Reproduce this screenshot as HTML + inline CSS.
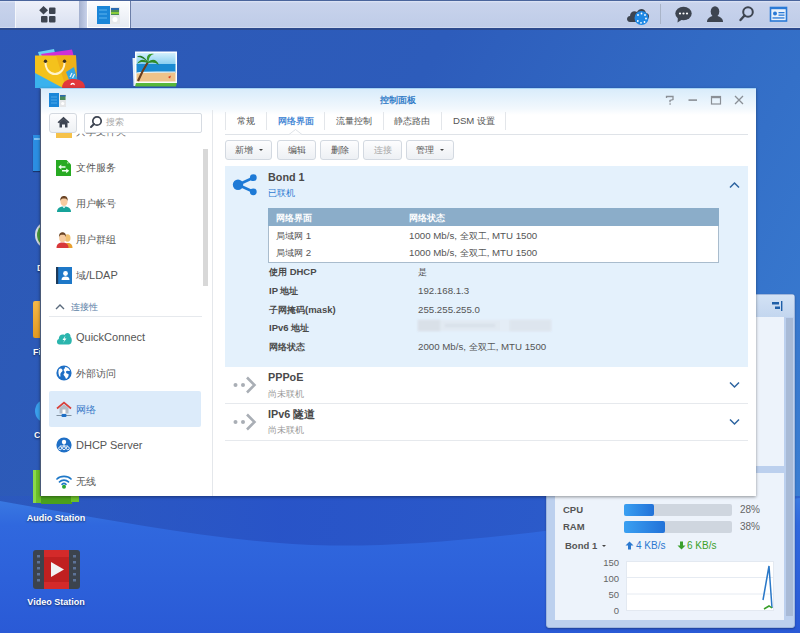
<!DOCTYPE html>
<html><head><meta charset="utf-8">
<style>
*{box-sizing:border-box;margin:0;padding:0}
html,body{width:800px;height:633px;overflow:hidden}
body{position:relative;font-family:"Liberation Sans",sans-serif;font-size:11px;color:#555;background:#2d5ec0}
.a{position:absolute}
.nw{white-space:nowrap}
.c{font-size:0.9em}
#bg{left:0;top:0;width:800px;height:633px;background:linear-gradient(120deg,#2c58b5 0%,#2d5cbb 40%,#3470c8 72%,#3c82d6 100%)}
#tb{left:0;top:0;width:800px;height:30px;background:linear-gradient(#dfe6f6 0px,#c8d3ec 2px,#bfcce8 26px,#dfe6f6 27px);border-top:1px solid #4a659c;border-bottom:2px solid #2c4a8e}
.dl{color:#fff;font-size:9px;font-weight:bold;text-shadow:0 1px 2px rgba(0,0,0,.5);text-align:center;width:90px}
#win{left:40px;top:88px;width:716px;height:408px;background:#fff;box-shadow:0 1px 3px rgba(0,0,0,.4);border-top:1px solid #a6d4f6;border-left:1px solid #4a5a78}
#title{left:41px;top:89px;width:715px;height:26px;background:linear-gradient(#d9ecfb,#f2f8fd 75%,#fff)}
.si{left:49px;width:152px;height:36px;border-radius:2px}
.si .tx{position:absolute;left:27px;top:12px;font-size:11px;color:#555;white-space:nowrap}
.si .tx .c{font-size:0.91em}
.si svg{position:absolute;left:7px;top:10px}
.tab{top:115px;font-size:9.6px;color:#555;white-space:nowrap}
.tab .c{font-size:0.92em}
.tsep{top:112px;width:1px;height:18px;background:#e3e6ea}
.btn{top:140px;height:20px;border:1px solid #d3d9e1;border-radius:3px;background:linear-gradient(#fdfdfe,#edf0f4);font-size:10px;color:#555;text-align:center;line-height:18px;white-space:nowrap}
.btn .c{font-size:0.9em}
.tri{display:inline-block;width:0;height:0;border-top:2.5px solid #444;border-left:2.5px solid transparent;border-right:2.5px solid transparent;margin-left:6px;vertical-align:2px}
.rw{font-size:9.7px;color:#555;white-space:nowrap}
.rw .c{font-size:0.92em}
.lb{font-size:9.5px;color:#4a4a4a;font-weight:bold;white-space:nowrap}
.lb .c{font-size:0.92em}
.hd{font-size:10.8px;font-weight:bold;color:#4a4a4a;white-space:nowrap}
.hd .c{font-size:1em}
.sub{font-size:9.5px;white-space:nowrap}
.sub .c{font-size:0.92em}
.wl{font-size:9.5px;font-weight:bold;color:#555;white-space:nowrap}
.wv{font-size:10px;color:#666;white-space:nowrap}
</style></head><body>
<div id="bg" class="a"></div>
<svg class="a" style="left:0;top:0" width="800" height="633">
  <defs><linearGradient id="sw" x1="0" y1="0" x2="0" y2="1"><stop offset="0" stop-color="#3a7ae2"/><stop offset="0.2" stop-color="#3068de"/><stop offset="1" stop-color="#2a5ad6"/></linearGradient>
  <linearGradient id="dk" x1="0" y1="0" x2="1" y2="0"><stop offset="0" stop-color="#2954c8" stop-opacity="0.3"/><stop offset="0.35" stop-color="#2853c8" stop-opacity="0.95"/><stop offset="1" stop-color="#2a58cc" stop-opacity="0.7"/></linearGradient></defs>
  <rect x="0" y="496" width="800" height="54" fill="url(#dk)"/>
  <path d="M0 501 C 100 518, 220 543, 330 545.5 C 440 547, 560 530, 800 498 L800 633 L0 633 Z" fill="url(#sw)"/>
</svg>

<!-- ===== desktop icons ===== -->
<!-- package center -->
<svg class="a" style="left:30px;top:45px" width="60" height="45" viewBox="0 0 60 45">
  <path d="M8 7 L24 4 L26 12 L10 13 Z" fill="#6cd3f2"/>
  <path d="M11 9 L42 4.5 L44 12 L13 13 Z" fill="#cf2fd8"/>
  <path d="M5 10.5 L46 10.5 L47 43 L5 43 Z" fill="#f4c21c"/>
  <path d="M26 10.5 L46 10.5 L47 43 L36 43 Z" fill="#efb018"/>
  <path d="M5 28 L33 43 L5 43 Z" fill="#3ab2ee"/>
  <path d="M15.5 17 C 15.5 33, 34.5 33, 34.5 17" stroke="#fff3c8" stroke-width="2" fill="none"/>
  <circle cx="15.5" cy="16.3" r="1.7" fill="#3a3020"/><circle cx="34.5" cy="16.3" r="1.7" fill="#3a3020"/>
  <path d="M36 27 L44 22 L48 37 L41 40 Z" fill="#36a6e2"/>
  <path d="M40 32 L42 28 M42.5 33 L44.5 29" stroke="#e8f6ff" stroke-width="1.2"/>
  <path d="M32 43 C 32 36, 38 34, 43 34 C 49 34, 55 36, 55 43 Z" fill="#e2383c"/>
  <path d="M41 40 C 41 38, 45 38, 44 40" stroke="#fff" stroke-width="1.3" fill="none"/>
</svg>
<!-- photo station -->
<svg class="a" style="left:131px;top:49px" width="50" height="40" viewBox="0 0 50 40">
  <path d="M1.5 9 L6 9 L6 37 L2.5 37 Z" fill="#e6eef6"/>
  <path d="M5 34 L46 33 L45 37.5 L4 37.5 Z" fill="#58b83a"/>
  <rect x="4" y="2.5" width="42" height="31.5" fill="#fbfdff"/>
  <defs><linearGradient id="sky" x1="0" y1="0" x2="0" y2="1"><stop offset="0" stop-color="#d2effc"/><stop offset="1" stop-color="#86cdf0"/></linearGradient></defs>
  <rect x="5.5" y="4" width="39" height="11.5" fill="url(#sky)"/>
  <rect x="5.5" y="15" width="39" height="9" fill="#1a8ad2"/>
  <path d="M5.5 24 C 15 22.5, 30 23.5, 44.5 23 L44.5 32.5 L5.5 32.5 Z" fill="#eec38a"/>
  <path d="M5.5 24 C 15 22.5, 30 23.5, 44.5 23" stroke="#e8f6fb" stroke-width="1.2" fill="none"/>
  <path d="M7 32 C 10 25, 13 19, 17 13" stroke="#6b3e1e" stroke-width="2.2" fill="none"/>
  <path d="M17 13 C 12 9, 8 11, 6 15 C 10 12, 13 13, 17 14 Z" fill="#2f8a2a"/>
  <path d="M17 13 C 22 9, 26 11, 28 16 C 24 13, 21 13, 17 14 Z" fill="#2f8a2a"/>
  <path d="M17 13 C 14 7, 18 3.5, 23 5 C 19 6, 18 9, 17.5 13 Z" fill="#3a9a2e"/>
  <path d="M17 13 C 12 6, 8 6, 6 8 C 10 8, 14 10, 17 13.5 Z" fill="#267a24"/>
  <path d="M37 28 L40 26.5 L39 29.5 Z" fill="#d83a20"/>
</svg>
<!-- left partial icons (hidden behind window) -->
<div class="a" style="left:33px;top:135px;width:12px;height:36px;background:#2b8ee2;box-shadow:0 1px 1px rgba(0,0,0,.4)"></div>
<div class="a" style="left:34px;top:138px;width:8px;height:2px;background:#7cc0f5"></div>
<div class="a" style="left:35px;top:221px;width:14px;height:28px;border-radius:14px 0 0 14px;border:2px solid #d4dae2;border-right:none;background:#4a9a3a"></div>
<div class="a dl nw" style="left:37px;top:263px;width:auto">D</div>
<div class="a" style="left:33px;top:301px;width:12px;height:37px;background:linear-gradient(#f5b848,#e39a22);border-radius:2px 0 0 2px"></div>
<div class="a dl nw" style="left:33px;top:347px;width:auto">Fi</div>
<div class="a" style="left:35px;top:399px;width:12px;height:24px;border-radius:12px 0 0 12px;background:#3aa0ec"></div>
<div class="a dl nw" style="left:34px;top:430px;width:auto">Cl</div>
<!-- audio station -->
<svg class="a" style="left:30px;top:468px" width="52" height="38" viewBox="0 0 52 38">
  <rect x="3" y="2" width="12" height="33" fill="#6cc02a"/>
  <rect x="3" y="2" width="3" height="33" fill="#8ad84a"/>
  <rect x="11" y="27" width="31" height="9" fill="#4aa01c"/>
  <rect x="41" y="27" width="8" height="7" fill="#6cc02a"/>
</svg>
<div class="a dl nw" style="left:11px;top:513px">Audio Station</div>
<!-- video station -->
<svg class="a" style="left:33px;top:550px" width="47" height="39" viewBox="0 0 47 39">
  <rect x="0" y="0" width="47" height="39" rx="3" fill="#3c434d"/>
  <rect x="11" y="0" width="25" height="39" fill="#d42a2a"/>
  <rect x="11" y="7" width="25" height="25" fill="#c02020"/>
  <path d="M18 12 L31 19.5 L18 27 Z" fill="#f2f2f2"/>
  <g fill="#5d7398"><rect x="4" y="5" width="3" height="2.5"/><rect x="4" y="11" width="3" height="2.5"/><rect x="4" y="17" width="3" height="2.5"/><rect x="4" y="23" width="3" height="2.5"/><rect x="4" y="29" width="3" height="2.5"/>
  <rect x="40" y="5" width="3" height="2.5"/><rect x="40" y="11" width="3" height="2.5"/><rect x="40" y="17" width="3" height="2.5"/><rect x="40" y="23" width="3" height="2.5"/><rect x="40" y="29" width="3" height="2.5"/></g>
</svg>
<div class="a dl nw" style="left:11px;top:597px">Video Station</div>

<div id="tb" class="a"></div>
<div class="a" style="left:15px;top:1px;width:1px;height:27px;background:#f4f6fb"></div>
<div class="a" style="left:16px;top:1px;width:63px;height:27px;background:linear-gradient(#eef1fa,#d9e0f0)"></div>
<div class="a" style="left:79px;top:1px;width:8px;height:27px;background:linear-gradient(90deg,#a4b1cf,#c8d2ea)"></div>
<div class="a" style="left:87px;top:1px;width:43px;height:27px;background:linear-gradient(#fbfcfe,#e6ebf3);border:1px solid #fff"></div>
<div class="a" style="left:130px;top:1px;width:1px;height:27px;background:#6c7ea8"></div>
<!-- apps icon -->
<svg class="a" style="left:38px;top:5px" width="20" height="19" viewBox="0 0 20 19">
  <path d="M5.5 1 L10 5.3 L5.5 9.6 L1.2 5.3 Z" fill="#3d4450"/>
  <rect x="11" y="2.5" width="6.5" height="6.5" rx="1" fill="#3d4450"/>
  <rect x="3" y="11" width="6.5" height="6.5" rx="1" fill="#3d4450"/>
  <rect x="11" y="11" width="6.5" height="6.5" rx="1" fill="#3d4450"/>
</svg>
<!-- control panel icon -->
<svg class="a" style="left:96px;top:5px" width="26" height="20" viewBox="0 0 26 20">
  <rect x="1" y="1" width="13" height="18" fill="#1a86d8"/>
  <g stroke="#6fc0f5" stroke-width="0.8"><line x1="3" y1="5" x2="11" y2="5"/><line x1="3" y1="9" x2="11" y2="9"/><line x1="3" y1="13" x2="11" y2="13"/></g>
  <rect x="14" y="2" width="10" height="17" fill="#e6e8ea"/>
  <rect x="15" y="3" width="8" height="7" fill="#4a8a5a"/>
  <rect x="15" y="3" width="8" height="2" fill="#2a6ab0"/>
  <rect x="15" y="7" width="8" height="2" fill="#8acb3a"/>
  <circle cx="19" cy="14.5" r="2.5" fill="#fff"/>
</svg>
<!-- cloud sync -->
<svg class="a" style="left:626px;top:5px" width="26" height="22" viewBox="0 0 26 22">
  <path d="M4 17 C0 17, 0 11, 4 11 C4 7, 8 5, 11 7 C13 3, 19 3, 20 8 C23 8, 24 12, 22 14 L20 17 Z" fill="#3d4450"/>
  <circle cx="15.5" cy="13" r="7" fill="#1e88e5"/>
  <g fill="#fff"><circle cx="15.5" cy="8.5" r="0.9"/><circle cx="19" cy="10" r="0.9"/><circle cx="20" cy="13.5" r="0.9"/><circle cx="18.5" cy="17" r="0.9"/><circle cx="15" cy="17.8" r="0.9"/><circle cx="11.8" cy="16" r="0.9"/><circle cx="12" cy="10" r="0.9"/></g>
</svg>
<div class="a" style="left:660px;top:4px;width:1px;height:20px;background:#a9b4c8"></div>
<!-- chat -->
<svg class="a" style="left:674px;top:5px" width="20" height="19" viewBox="0 0 20 19">
  <ellipse cx="9.5" cy="8.5" rx="8.2" ry="6.8" fill="#3d4450"/>
  <path d="M4 12 L3.5 17.5 L9 14 Z" fill="#3d4450"/>
  <circle cx="6" cy="8.5" r="1.1" fill="#fff"/><circle cx="9.5" cy="8.5" r="1.1" fill="#fff"/><circle cx="13" cy="8.5" r="1.1" fill="#fff"/>
</svg>
<!-- user -->
<svg class="a" style="left:705px;top:5px" width="20" height="19" viewBox="0 0 20 19">
  <ellipse cx="10" cy="6.5" rx="4.3" ry="5.3" fill="#3d4450"/>
  <path d="M7.5 11 L12.5 11 C17 12.5, 18 14.5, 18 17 L2 17 C2 14.5, 3 12.5, 7.5 11 Z" fill="#3d4450"/>
</svg>
<!-- search -->
<svg class="a" style="left:737px;top:5px" width="20" height="19" viewBox="0 0 20 19">
  <circle cx="11" cy="7" r="4.8" stroke="#3d4450" stroke-width="2" fill="none"/>
  <line x1="7.5" y1="10.5" x2="3.5" y2="15" stroke="#3d4450" stroke-width="2.4" stroke-linecap="round"/>
</svg>
<!-- card -->
<svg class="a" style="left:768px;top:5px" width="20" height="19" viewBox="0 0 20 19">
  <rect x="2.5" y="2.5" width="16" height="13.5" fill="#e9f1fb" stroke="#2a7ad6" stroke-width="1.6"/>
  <rect x="2.5" y="2" width="16" height="2.2" fill="#2a7ad6"/>
  <circle cx="7" cy="8.5" r="2" fill="#2a7ad6"/>
  <rect x="10.5" y="7" width="6" height="1.3" fill="#2a7ad6"/>
  <rect x="10.5" y="9.5" width="6" height="1.3" fill="#2a7ad6"/>
  <rect x="4.5" y="12.3" width="12" height="1.3" fill="#2a7ad6"/>
</svg>

<!-- widget frame -->
<div class="a" style="left:546px;top:294px;width:249px;height:334px;background:#bcd0ee;border:1px solid #9fb6dc;border-radius:3px;box-shadow:0 1px 2px rgba(0,0,0,.3)"></div>
<div class="a" style="left:547px;top:295px;width:247px;height:22px;background:linear-gradient(#d3e2f5,#c3d6ef)"></div>
<svg class="a" style="left:770px;top:300px" width="14" height="12" viewBox="0 0 14 12">
  <rect x="2" y="2" width="7" height="2.5" fill="#1f5fa8"/>
  <rect x="5" y="6.5" width="5" height="2.5" fill="#1f5fa8"/>
  <rect x="11" y="1" width="1.4" height="10" fill="#1f5fa8"/>
</svg>
<div class="a" style="left:555px;top:317px;width:229px;height:149px;background:#edf3fb"></div>
<div class="a" style="left:555px;top:473px;width:229px;height:147px;background:#edf3fb"></div>
<div class="a" style="left:786px;top:318px;width:7px;height:298px;background:#a8bad6"></div>
<!-- stats -->
<div class="a wl" style="left:563px;top:504px">CPU</div>
<div class="a" style="left:624px;top:504px;width:108px;height:12px;background:#cfd6df;border-radius:2px"></div>
<div class="a" style="left:624px;top:504px;width:30px;height:12px;background:linear-gradient(90deg,#3aa0f2,#2272d8);border-radius:2px"></div>
<div class="a wv" style="left:740px;top:504px">28%</div>
<div class="a wl" style="left:563px;top:521px">RAM</div>
<div class="a" style="left:624px;top:521px;width:108px;height:12px;background:#cfd6df;border-radius:2px"></div>
<div class="a" style="left:624px;top:521px;width:41px;height:12px;background:linear-gradient(90deg,#3aa0f2,#2272d8);border-radius:2px"></div>
<div class="a wv" style="left:740px;top:521px">38%</div>
<div class="a wl" style="left:565px;top:540px">Bond 1<span class="tri" style="margin-left:5px"></span></div>
<svg class="a" style="left:625px;top:541px" width="9" height="9" viewBox="0 0 9 9"><path d="M4.5 0.5 L8.5 4.5 L6 4.5 L6 8.5 L3 8.5 L3 4.5 L0.5 4.5 Z" fill="#2a78d0"/></svg>
<div class="a wv" style="left:636px;top:540px;color:#2a78d0">4 KB/s</div>
<svg class="a" style="left:677px;top:541px" width="9" height="9" viewBox="0 0 9 9"><path d="M4.5 8.5 L8.5 4.5 L6 4.5 L6 0.5 L3 0.5 L3 4.5 L0.5 4.5 Z" fill="#3aa02a"/></svg>
<div class="a wv" style="left:687px;top:540px;color:#3aa02a">6 KB/s</div>
<!-- chart -->
<div class="a wv" style="left:590px;top:557px;width:29px;text-align:right;font-size:9.5px">150</div>
<div class="a wv" style="left:590px;top:573px;width:29px;text-align:right;font-size:9.5px">100</div>
<div class="a wv" style="left:590px;top:589px;width:29px;text-align:right;font-size:9.5px">50</div>
<div class="a wv" style="left:590px;top:605px;width:29px;text-align:right;font-size:9.5px">0</div>
<svg class="a" style="left:626px;top:561px" width="148" height="50" viewBox="0 0 148 50">
  <rect x="0.5" y="0.5" width="147" height="49" fill="#fff" stroke="#e3e9f1"/>
  <line x1="1" y1="16.5" x2="147" y2="16.5" stroke="#e6ebf2"/>
  <line x1="1" y1="33" x2="147" y2="33" stroke="#e6ebf2"/>
  <polyline points="137,39 143,5 146,47" stroke="#2a78c8" stroke-width="1.5" fill="none"/>
  <polyline points="138,48 143,45 146,47" stroke="#3aa02a" stroke-width="1.5" fill="none"/>
</svg>

<div id="win" class="a"></div>
<div id="title" class="a"></div>
<svg class="a" style="left:49px;top:93px" width="18" height="15" viewBox="0 0 18 15">
  <rect x="0" y="0" width="10" height="14" fill="#1a86d8"/>
  <g stroke="#6fc0f5" stroke-width="0.6"><line x1="2" y1="4" x2="8" y2="4"/><line x1="2" y1="7" x2="8" y2="7"/><line x1="2" y1="10" x2="8" y2="10"/></g>
  <rect x="10.5" y="1" width="6.5" height="13" fill="#e4e6e8"/>
  <rect x="11" y="2" width="5.5" height="5" fill="#4a8a5a"/>
  <rect x="11" y="2" width="5.5" height="1.5" fill="#2a6ab0"/>
  <circle cx="13.7" cy="10.5" r="1.6" fill="#fff"/>
</svg>
<div class="a nw" style="left:380px;top:94px;font-size:10.3px;color:#1f73c4;-webkit-text-stroke:0.25px #1f73c4"><span class="c">控制面板</span></div>
<!-- window controls -->
<svg class="a" style="left:662px;top:94px" width="86" height="12" viewBox="0 0 86 12">
  <path d="M4.5 4 L4.5 2.5 L11 2.5 L11 5.5 L8 6.5 L8 8.2" stroke="#8a8f96" stroke-width="1.3" fill="none"/>
  <rect x="7.4" y="9.3" width="1.4" height="1.4" fill="#8a8f96"/>
  <rect x="26.5" y="5.3" width="8.5" height="1.6" fill="#8a8f96"/>
  <rect x="49.5" y="2.5" width="9" height="7.5" stroke="#8a8f96" stroke-width="1.2" fill="none"/>
  <rect x="49" y="2" width="10" height="2.2" fill="#8a8f96"/>
  <path d="M73 2 L81 10 M81 2 L73 10" stroke="#8a8f96" stroke-width="1.3"/>
</svg>
<div class="a" style="left:212px;top:110px;width:1px;height:386px;background:#e4e7eb"></div>

<!-- sidebar -->
<div class="a" style="left:49px;top:113px;width:28px;height:20px;border:1px solid #d4d9e0;border-radius:3px;background:linear-gradient(#fdfdfe,#eef1f4)"></div>
<svg class="a" style="left:57px;top:116px" width="13" height="12" viewBox="0 0 13 12">
  <path d="M6.5 0.8 L12.5 6.3 L11 7.2 L6.5 3.2 L2 7.2 L0.5 6.3 Z" fill="#3d4451"/>
  <path d="M2.5 6.5 L6.5 3 L10.5 6.5 L10.5 11.5 L8 11.5 L8 8.5 L5 8.5 L5 11.5 L2.5 11.5 Z" fill="#3d4451"/>
</svg>
<div class="a" style="left:84px;top:113px;width:118px;height:20px;border:1px solid #d6dbe2;border-radius:2px;background:#fff"></div>
<svg class="a" style="left:89px;top:115px" width="14" height="14" viewBox="0 0 14 14">
  <circle cx="8" cy="6" r="4.2" stroke="#3d4451" stroke-width="1.7" fill="none"/>
  <line x1="5" y1="9" x2="2" y2="12" stroke="#3d4451" stroke-width="2" stroke-linecap="round"/>
</svg>
<div class="a nw" style="left:106px;top:116px;font-size:10px;color:#aaa"><span class="c">搜索</span></div>

<!-- list (clipped) -->
<div class="a" style="left:41px;top:133px;width:171px;height:363px;overflow:hidden">
 <div class="a" style="left:-41px;top:-133px;width:212px;height:496px">
  <div class="a si" style="top:113px">
    <svg width="16" height="16" viewBox="0 0 16 16"><rect x="0" y="3" width="16" height="12" fill="#f2b035"/><rect x="0" y="9" width="16" height="6" fill="#f6c24a"/></svg>
    <div class="tx" style="color:#666"><span class="c">共享文件夹</span></div></div>
  <div class="a si" style="top:149px">
    <svg width="15" height="16" viewBox="0 0 15 16" style="left:7px;top:11px"><path d="M0 0 L10.5 0 L15 4.5 L15 16 L0 16 Z" fill="#27aa22"/><circle cx="11.8" cy="2.8" r="0.9" fill="#9ae090"/><path d="M4 7 L9.5 7 M11.5 10.8 L6 10.8" stroke="#f0fff0" stroke-width="1.6" fill="none"/><path d="M2.3 7 L5.3 4.6 L5.3 9.4 Z M13.2 10.8 L10.2 8.4 L10.2 13.2 Z" fill="#f0fff0"/></svg>
    <div class="tx"><span class="c">文件服务</span></div></div>
  <div class="a si" style="top:185px">
    <svg width="16" height="17" viewBox="0 0 16 17"><path d="M1 17 C1 13, 4 11.5, 8 11.5 C12 11.5, 15 13, 15 17 Z" fill="#17a39a"/><path d="M6.3 11.5 L8 13.3 L9.7 11.5 Z" fill="#fff"/><ellipse cx="8" cy="6.5" rx="3.6" ry="4.6" fill="#f6cba0"/><path d="M4.3 6 C4 2, 6 1, 8 1 C10 1, 12 2, 11.7 6 C11 4, 10 3.5, 8 3.5 C6 3.5, 5 4, 4.3 6 Z" fill="#6b4526"/></svg>
    <div class="tx"><span class="c">用户帐号</span></div></div>
  <div class="a si" style="top:221px">
    <svg width="17" height="17" viewBox="0 0 17 17"><ellipse cx="11.5" cy="7" rx="3" ry="3.8" fill="#f0c070"/><path d="M8 17 C8 13, 10 12, 12 12 C14.5 12, 16.5 13.5, 16.5 17 Z" fill="#e8a030"/><path d="M0.5 17 C0.5 13, 3 11.5, 6.5 11.5 C10 11.5, 12.5 13, 12.5 17 Z" fill="#d8383a"/><ellipse cx="6.5" cy="6.8" rx="3.4" ry="4.4" fill="#f6cba0"/><path d="M3 6.3 C2.8 2, 5 1.3, 6.5 1.3 C8 1.3, 10.2 2, 10 6.3 C9.5 4.3, 8.5 3.8, 6.5 3.8 C4.5 3.8, 3.5 4.3, 3 6.3 Z" fill="#6b4526"/></svg>
    <div class="tx"><span class="c">用户群组</span></div></div>
  <div class="a si" style="top:257px">
    <svg width="16" height="17" viewBox="0 0 16 17"><rect x="0" y="0" width="16" height="17" fill="#1e78c8"/><rect x="0" y="0" width="2.2" height="17" fill="#1c3a5a"/><circle cx="9.5" cy="6.5" r="2.4" fill="#fff"/><path d="M5.5 13 C5.5 10.5, 7 9.5, 9.5 9.5 C12 9.5, 13.5 10.5, 13.5 13 Z" fill="#fff"/></svg>
    <div class="tx"><span class="c">域</span>/LDAP</div></div>
  <svg class="a" style="left:55px;top:303px" width="10" height="7" viewBox="0 0 10 7"><path d="M1 6 L5 2 L9 6" stroke="#5a6a7c" stroke-width="1.4" fill="none"/></svg>
  <div class="a nw" style="left:71px;top:299.5px;font-size:10.5px;color:#5b7ea6"><span class="c" style="font-size:0.9em"><span class="c">连接性</span></span></div>
  <div class="a" style="left:49px;top:316px;width:153px;height:1px;background:#e6e9ed"></div>
  <div class="a si" style="top:319px">
    <svg width="16" height="14" viewBox="0 0 16 14" style="top:12px"><path d="M3.5 13.5 C0.5 13.5, 0 9, 2.8 8 C2.5 4.5, 6 2.5, 8.5 4 C10 0.5, 15 1.5, 14.5 6 C16.5 7, 16.3 13.5, 13 13.5 Z" fill="#2bb5ad"/><path d="M9.5 4.5 L6.5 9 L8.5 9 L7 12 L10.5 7.5 L8.5 7.5 Z" fill="#fff"/></svg>
    <div class="tx">QuickConnect</div></div>
  <div class="a si" style="top:355px">
    <svg width="16" height="16" viewBox="0 0 16 16"><circle cx="8" cy="8" r="7.6" fill="#1e6fc6"/><path d="M3 4 C4.5 3, 6 3.5, 6.5 5 C7 6.5, 5 7, 4.5 8.5 C4 10, 5 11, 4 12 C2.5 10.5, 1.8 7, 3 4 Z M9 2 C11 2, 13.5 3.5, 14 6 C12.5 6, 11 5, 10 6.5 C9.5 7.5, 11 9, 12.5 9 C13 10.5, 12 13, 10 14 C9.5 12.5, 9 11.5, 8 10.5 C7 9.5, 8 8.5, 8.5 8 C9 7, 8 6, 7.5 5 C8 4, 9 3.5, 9 2 Z" fill="#fff"/></svg>
    <div class="tx"><span class="c">外部访问</span></div></div>
  <div class="a si" style="top:391px;background:#dcebfa">
    <svg width="16" height="17" viewBox="0 0 16 17"><path d="M1 7.5 L8 1.5 L15 7.5" stroke="#d8403a" stroke-width="1.7" fill="none"/><path d="M3.5 7 L8 3.3 L12.5 7 L12.5 12.5 L3.5 12.5 Z" fill="#b4bcc6"/><rect x="6.5" y="8.5" width="3" height="4" fill="#fff"/><line x1="0.5" y1="14.5" x2="15.5" y2="14.5" stroke="#6a7a8a" stroke-width="0.8"/><rect x="5.5" y="13" width="5" height="3" rx="1" fill="#1e6fc6"/></svg>
    <div class="tx" style="color:#3a7ac8"><span class="c">网络</span></div></div>
  <div class="a si" style="top:427px">
    <svg width="16" height="16" viewBox="0 0 16 16"><circle cx="8" cy="8" r="7.6" fill="#1e6fc6"/><circle cx="8" cy="5" r="2.2" fill="#fff"/><g stroke="#fff" stroke-width="0.9" fill="none"><line x1="8" y1="7" x2="8" y2="9"/><line x1="4" y1="9" x2="12" y2="9"/><circle cx="4.2" cy="11.2" r="1.5"/><circle cx="8" cy="11.2" r="1.5"/><circle cx="11.8" cy="11.2" r="1.5"/></g></svg>
    <div class="tx">DHCP Server</div></div>
  <div class="a si" style="top:463px">
    <svg width="16" height="15" viewBox="0 0 16 15" style="top:11px"><g stroke="#1e78c8" stroke-width="1.7" fill="none" stroke-linecap="round"><path d="M1 5 C4.5 1.5, 11.5 1.5, 15 5"/><path d="M3.5 7.8 C6 5.5, 10 5.5, 12.5 7.8"/><path d="M6 10.3 C7.2 9.3, 8.8 9.3, 10 10.3"/></g><circle cx="8" cy="12.8" r="2" fill="#2aa838"/></svg>
    <div class="tx"><span class="c">无线</span></div></div>
  <div class="a" style="left:203px;top:149px;width:5px;height:137px;background:#d8d8d8"></div>
 </div>
</div>

<!-- tabs -->
<div class="a tsep" style="left:225px"></div>
<div class="a tab" style="left:237px"><span class="c">常规</span></div>
<div class="a tsep" style="left:266px"></div>
<div class="a tab" style="left:278px;color:#2f7ad2;-webkit-text-stroke:0.2px #2f7ad2"><span class="c">网络界面</span></div>
<div class="a tsep" style="left:324px"></div>
<div class="a tab" style="left:336px"><span class="c">流量控制</span></div>
<div class="a tsep" style="left:383px"></div>
<div class="a tab" style="left:394px"><span class="c">静态路由</span></div>
<div class="a tsep" style="left:441px"></div>
<div class="a tab" style="left:453px">DSM <span class="c">设置</span></div>
<div class="a tsep" style="left:505px"></div>
<div class="a" style="left:225px;top:134px;width:523px;height:1px;background:#dfe3e8"></div>
<svg class="a" style="left:289px;top:129px" width="13" height="7" viewBox="0 0 13 7"><path d="M0 5.5 L6.5 0.5 L13 5.5" stroke="#dfe3e8" stroke-width="1" fill="#fff"/></svg>

<!-- buttons -->
<div class="a btn" style="left:225px;width:47px"><span class="c">新增</span><span class="tri"></span></div>
<div class="a btn" style="left:277px;width:39px"><span class="c">编辑</span></div>
<div class="a btn" style="left:320px;width:39px"><span class="c">删除</span></div>
<div class="a btn" style="left:363px;width:39px;color:#aaa"><span class="c">连接</span></div>
<div class="a btn" style="left:406px;width:48px"><span class="c">管理</span><span class="tri"></span></div>

<!-- bond panel -->
<div class="a" style="left:225px;top:166px;width:523px;height:201px;background:#e4f1fc"></div>
<svg class="a" style="left:231px;top:172px" width="28" height="25" viewBox="0 0 28 25">
  <g stroke="#1e7ad6" stroke-width="2.6"><line x1="7" y1="12.7" x2="22.3" y2="5.7"/><line x1="7" y1="12.7" x2="22.3" y2="19.8"/></g>
  <circle cx="7" cy="12.7" r="5.2" fill="#1e7ad6"/><circle cx="22.3" cy="5.7" r="3.4" fill="#1e7ad6"/><circle cx="22.3" cy="19.8" r="3.4" fill="#1e7ad6"/>
</svg>
<div class="a hd" style="left:268px;top:171px">Bond 1</div>
<div class="a sub" style="left:268px;top:187px;color:#2f7ad2"><span class="c">已联机</span></div>
<svg class="a" style="left:729px;top:181px" width="11" height="8" viewBox="0 0 11 8"><path d="M1 6.5 L5.5 2 L10 6.5" stroke="#2d64a0" stroke-width="1.5" fill="none"/></svg>
<div class="a" style="left:268px;top:208px;width:451px;height:55px;border:1px solid #a9bccd;background:#fff"></div>
<div class="a" style="left:268px;top:208px;width:451px;height:18px;background:#8badc9"></div>
<div class="a lb" style="left:276px;top:212px;color:#fff"><span class="c">网络界面</span></div>
<div class="a lb" style="left:409px;top:212px;color:#fff"><span class="c">网络状态</span></div>
<div class="a rw" style="left:276px;top:230px"><span class="c">局域网</span> 1</div>
<div class="a rw" style="left:409px;top:230px">1000 Mb/s, <span class="c">全双工</span>, MTU 1500</div>
<div class="a rw" style="left:276px;top:247px"><span class="c">局域网</span> 2</div>
<div class="a rw" style="left:409px;top:247px">1000 Mb/s, <span class="c">全双工</span>, MTU 1500</div>

<div class="a lb" style="left:269px;top:266px"><span class="c">使用</span> DHCP</div><div class="a rw" style="left:418px;top:266px"><span class="c">是</span></div>
<div class="a lb" style="left:269px;top:285px">IP <span class="c">地址</span></div><div class="a rw" style="left:418px;top:285px">192.168.1.3</div>
<div class="a lb" style="left:269px;top:304px"><span class="c">子网掩码</span>(mask)</div><div class="a rw" style="left:418px;top:304px">255.255.255.0</div>
<div class="a lb" style="left:269px;top:322px">IPv6 <span class="c">地址</span></div>
<div class="a" style="left:418px;top:320px;width:133px;height:11px;background:#e2eaf2;filter:blur(0.8px)"></div>
<div class="a" style="left:418px;top:320px;width:22px;height:11px;background:#d9e0e8;filter:blur(1px)"></div>
<div class="a" style="left:500px;top:320px;width:9px;height:11px;background:#e4edf6;filter:blur(0.6px)"></div>
<div class="a" style="left:510px;top:320px;width:41px;height:11px;background:#dde5ee;filter:blur(1px)"></div>
<div class="a" style="left:445px;top:324px;width:50px;height:3px;background:#d8e0e9;filter:blur(1px)"></div>
<div class="a lb" style="left:269px;top:341px"><span class="c">网络状态</span></div><div class="a rw" style="left:418px;top:341px">2000 Mb/s, <span class="c">全双工</span>, MTU 1500</div>

<!-- pppoe -->
<svg class="a" style="left:231px;top:375px" width="28" height="20" viewBox="0 0 28 20">
  <circle cx="4.5" cy="10" r="2" fill="#a9aeb5"/><circle cx="12" cy="10" r="2" fill="#a9aeb5"/>
  <path d="M16 2.5 L23.5 10 L16 17.5" stroke="#a9aeb5" stroke-width="2.6" fill="none"/>
</svg>
<div class="a hd" style="left:268px;top:371px">PPPoE</div>
<div class="a sub" style="left:268px;top:388px;color:#999"><span class="c">尚未联机</span></div>
<svg class="a" style="left:729px;top:381px" width="11" height="8" viewBox="0 0 11 8"><path d="M1 1.5 L5.5 6 L10 1.5" stroke="#2d64a0" stroke-width="1.5" fill="none"/></svg>
<div class="a" style="left:225px;top:403px;width:523px;height:1px;background:#e6e9ed"></div>
<svg class="a" style="left:231px;top:412px" width="28" height="20" viewBox="0 0 28 20">
  <circle cx="4.5" cy="10" r="2" fill="#a9aeb5"/><circle cx="12" cy="10" r="2" fill="#a9aeb5"/>
  <path d="M16 2.5 L23.5 10 L16 17.5" stroke="#a9aeb5" stroke-width="2.6" fill="none"/>
</svg>
<div class="a hd" style="left:268px;top:408px">IPv6 <span class="c">隧道</span></div>
<div class="a sub" style="left:268px;top:424px;color:#999"><span class="c">尚未联机</span></div>
<svg class="a" style="left:729px;top:418px" width="11" height="8" viewBox="0 0 11 8"><path d="M1 1.5 L5.5 6 L10 1.5" stroke="#2d64a0" stroke-width="1.5" fill="none"/></svg>
<div class="a" style="left:225px;top:440px;width:523px;height:1px;background:#e6e9ed"></div>

</body></html>
